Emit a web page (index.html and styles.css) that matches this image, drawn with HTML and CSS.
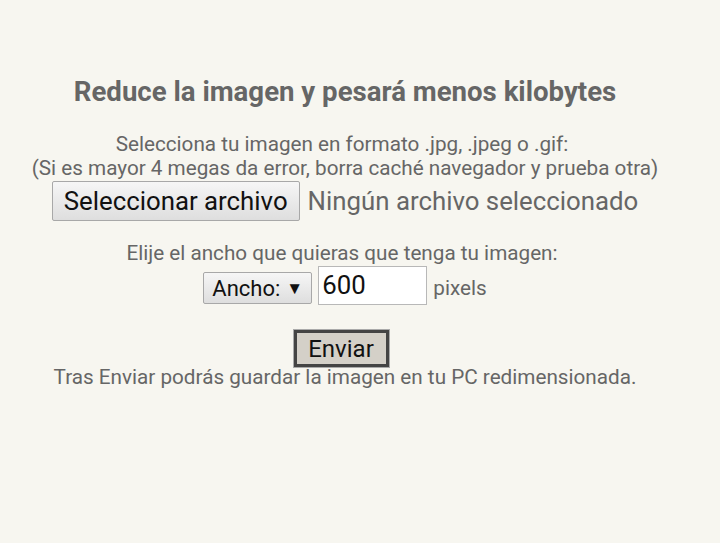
FILE: index.html
```html
<!DOCTYPE html>
<html lang="es">
<head>
<meta charset="utf-8">
<link rel="stylesheet" href="styles.css">
</head>
<body>
<div class="page">
  <h1 class="title">Reduce la imagen y pesará menos kilobytes</h1>
  <p class="info"><span class="shift">Selecciona tu imagen en formato .jpg, .jpeg o .gif:</span><br>(Si es mayor 4 megas da error, borra caché navegador y prueba otra)</p>
  <div class="file-row">
    <button class="file-btn" type="button">Seleccionar archivo</button>
    <span class="file-name">Ningún archivo seleccionado</span>
  </div>
  <p class="info width-label"><span class="shift">Elije el ancho que quieras que tenga tu imagen:</span></p>
  <div class="width-row">
    <span class="select">Ancho: <span class="arrow">▼</span></span>
    <span class="num-input">600</span>
    <span class="unit">pixels</span>
  </div>
  <div class="submit-row">
    <button class="submit" type="button">Enviar</button>
  </div>
  <p class="info after">Tras Enviar podrás guardar la imagen en tu PC redimensionada.</p>
</div>
</body>
</html>
```
FILE: styles.css
```css
html, body {
  margin: 0;
  padding: 0;
  background: #f7f6f0;
}
body {
  font-family: Roboto, "Liberation Sans", sans-serif;
  color: #666;
}
.page {
  width: 690px;
  text-align: center;
  padding-top: 76px;
}
.title {
  margin: 0;
  font-size: 27.6px;
  font-weight: bold;
  line-height: 32px;
  color: #666;
}
.info {
  margin: 0;
  font-size: 20.7px;
  line-height: 24px;
}
.shift {
  margin-right: 6px;
}
.title + .info {
  margin-top: 24px;
}
.file-row {
  display: flex;
  justify-content: center;
  align-items: center;
  gap: 8px;
  margin-top: 1px;
}
.file-btn {
  font-family: Roboto, "Liberation Sans", sans-serif;
  font-size: 25.8px;
  color: #111;
  height: 40px;
  padding: 0 11px;
  border: 1px solid #a8a8a8;
  border-radius: 2px;
  background: linear-gradient(#f6f6f6, #dedede);
}
.file-name {
  font-size: 25.8px;
  color: #666;
}
.width-label {
  margin-top: 20px;
}
.width-row {
  display: flex;
  justify-content: center;
  align-items: flex-start;
  gap: 6px;
  margin-top: 1px;
}
.select {
  display: inline-flex;
  align-items: center;
  gap: 6px;
  box-sizing: border-box;
  width: 109px;
  height: 32px;
  padding: 0 8px;
  font-size: 22px;
  color: #111;
  border: 1px solid #a8a8a8;
  border-radius: 2px;
  background: linear-gradient(#f6f6f6, #dedede);
  margin-top: 6px;
}
.arrow {
  font-size: 17px;
}
.num-input {
  box-sizing: border-box;
  width: 109px;
  height: 39px;
  padding: 0 3px;
  text-align: left;
  font-size: 25.8px;
  line-height: 37px;
  color: #111;
  background: #fff;
  border: 1px solid #b8b8b8;
}
.unit {
  font-size: 20.7px;
  line-height: 24px;
  margin-top: 10px;
}
.submit-row {
  margin-top: 25px;
  padding-right: 8px;
}
.submit {
  font-family: Roboto, "Liberation Sans", sans-serif;
  font-size: 24px;
  color: #111;
  width: 95px;
  height: 37px;
  padding: 0;
  border: 3px solid #444;
  outline: 1px solid #aaa;
  background: #d4d0c8;
}
.after {
  margin-top: -2px;
}
```
